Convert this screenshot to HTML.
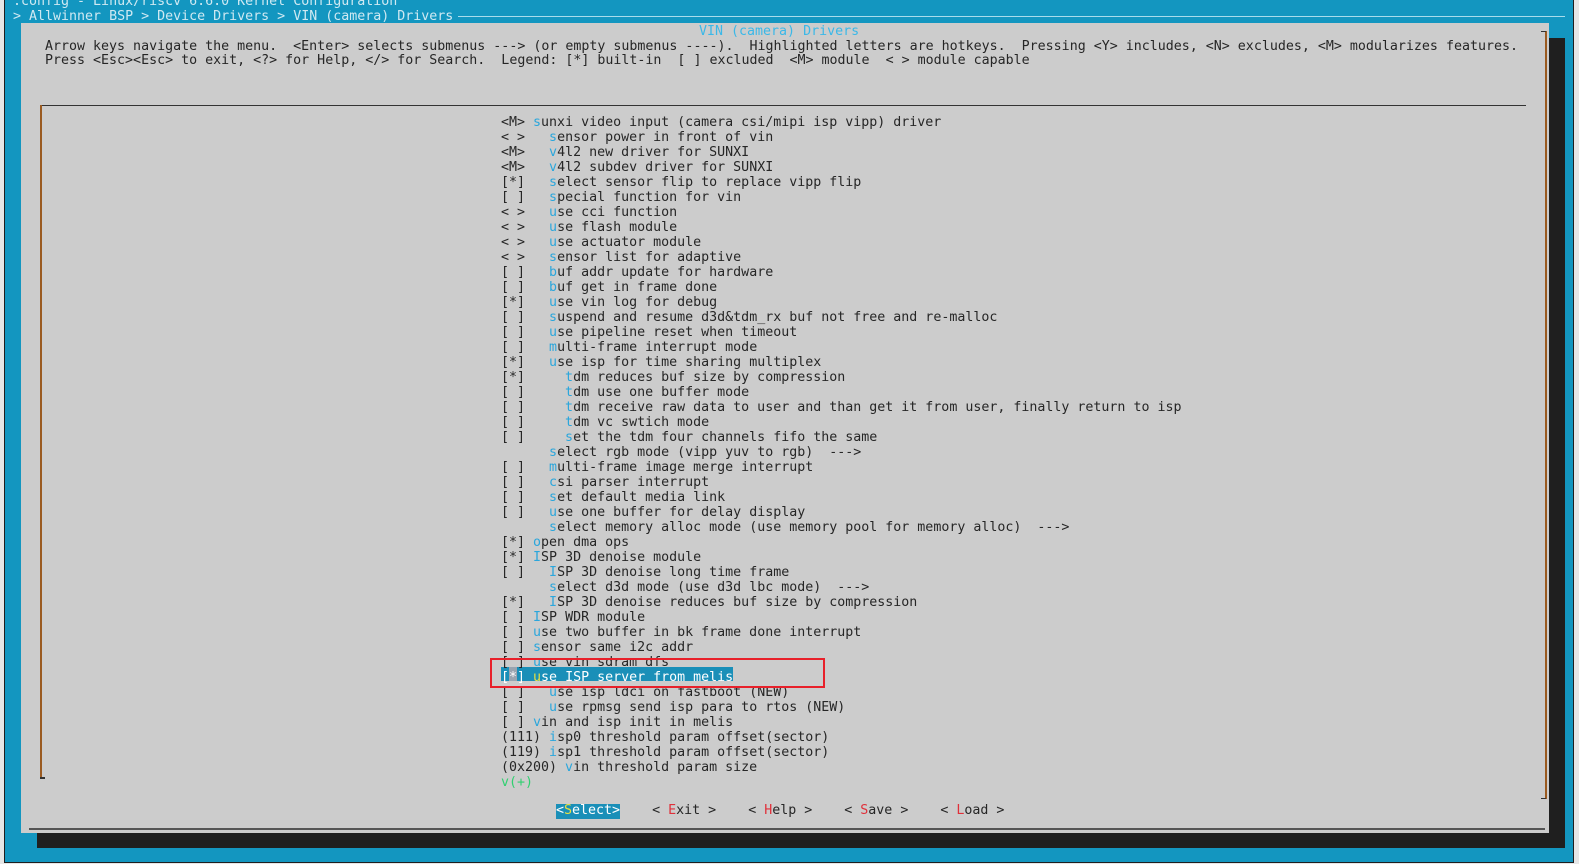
<!DOCTYPE html>
<html><head><meta charset="utf-8"><style>
*{margin:0;padding:0}
body{width:1579px;height:864px;background:#e6e6e6;position:relative;overflow:hidden;font-family:"DejaVu Sans Mono","Liberation Mono",monospace;font-size:13.3px;}
.abs{position:absolute}
pre{position:absolute;font-family:inherit;font-size:13.3px;line-height:14.9px;color:#262626;white-space:pre}
.h{color:#2aa6dc}
.r{color:#e0303a}
</style></head><body>
<div class="abs" style="left:4px;top:0;width:1570px;height:863px;background:#1f1f1f"></div>
<div class="abs" style="left:5px;top:0;width:1568px;height:862px;background:#1396c0"></div>
<pre style="left:13px;top:-5px;color:#cfe9f2">.config - Linux/riscv 6.6.0 Kernel Configuration
> Allwinner BSP > Device Drivers > VIN (camera) Drivers</pre>
<div class="abs" style="left:458px;top:16px;width:1107px;height:1px;background:#a8dcec"></div>
<div class="abs" style="left:37px;top:38px;width:1528px;height:810px;background:#1f1f1f"></div>
<div class="abs" style="left:21px;top:23px;width:1528px;height:810px;background:#cccccc"></div>
<pre style="left:699px;top:24.5px;color:#3ab8e8">VIN (camera) Drivers</pre>
<pre style="left:45px;top:39.5px">Arrow keys navigate the menu.  &lt;Enter&gt; selects submenus ---&gt; (or empty submenus ----).  Highlighted letters are hotkeys.  Pressing &lt;Y&gt; includes, &lt;N&gt; excludes, &lt;M&gt; modularizes features.
Press &lt;Esc&gt;&lt;Esc&gt; to exit, &lt;?&gt; for Help, &lt;/&gt; for Search.  Legend: [*] built-in  [ ] excluded  &lt;M&gt; module  &lt; &gt; module capable</pre>
<div class="abs" style="left:40px;top:105px;width:1486px;height:1px;background:#333"></div>
<div class="abs" style="left:40px;top:105px;width:2px;height:673px;background:#9a5a20"></div>
<div class="abs" style="left:40px;top:777px;width:5px;height:2px;background:#333"></div>
<div class="abs" style="left:1545px;top:31px;width:2px;height:768px;background:#9a5a20"></div>
<div class="abs" style="left:1541px;top:31px;width:5px;height:1px;background:#333"></div>
<div class="abs" style="left:1541px;top:798px;width:5px;height:1px;background:#333"></div>
<div class="abs" style="left:29px;top:828px;width:1516px;height:2px;background:#555"></div>
<div class="abs" style="left:501px;top:667px;width:232px;height:14px;background:#1a8fb8"></div>
<div class="abs" style="left:509px;top:667px;width:8px;height:14px;background:#9aa4b0"></div>
<pre style="left:501px;top:114.5px;line-height:15.02px">&lt;M&gt; <span class="h">s</span>unxi video input (camera csi/mipi isp vipp) driver
&lt; &gt;   <span class="h">s</span>ensor power in front of vin
&lt;M&gt;   <span class="h">v</span>4l2 new driver for SUNXI
&lt;M&gt;   <span class="h">v</span>4l2 subdev driver for SUNXI
[*]   <span class="h">s</span>elect sensor flip to replace vipp flip
[ ]   <span class="h">s</span>pecial function for vin
&lt; &gt;   <span class="h">u</span>se cci function
&lt; &gt;   <span class="h">u</span>se flash module
&lt; &gt;   <span class="h">u</span>se actuator module
&lt; &gt;   <span class="h">s</span>ensor list for adaptive
[ ]   <span class="h">b</span>uf addr update for hardware
[ ]   <span class="h">b</span>uf get in frame done
[*]   <span class="h">u</span>se vin log for debug
[ ]   <span class="h">s</span>uspend and resume d3d&amp;tdm_rx buf not free and re-malloc
[ ]   <span class="h">u</span>se pipeline reset when timeout
[ ]   <span class="h">m</span>ulti-frame interrupt mode
[*]   <span class="h">u</span>se isp for time sharing multiplex
[*]     <span class="h">t</span>dm reduces buf size by compression
[ ]     <span class="h">t</span>dm use one buffer mode
[ ]     <span class="h">t</span>dm receive raw data to user and than get it from user, finally return to isp
[ ]     <span class="h">t</span>dm vc swtich mode
[ ]     <span class="h">s</span>et the tdm four channels fifo the same
      <span class="h">s</span>elect rgb mode (vipp yuv to rgb)  ---&gt;
[ ]   <span class="h">m</span>ulti-frame image merge interrupt
[ ]   <span class="h">c</span>si parser interrupt
[ ]   <span class="h">s</span>et default media link
[ ]   <span class="h">u</span>se one buffer for delay display
      <span class="h">s</span>elect memory alloc mode (use memory pool for memory alloc)  ---&gt;
[*] <span class="h">o</span>pen dma ops
[*] <span class="h">I</span>SP 3D denoise module
[ ]   <span class="h">I</span>SP 3D denoise long time frame
      <span class="h">s</span>elect d3d mode (use d3d lbc mode)  ---&gt;
[*]   <span class="h">I</span>SP 3D denoise reduces buf size by compression
[ ] <span class="h">I</span>SP WDR module
[ ] <span class="h">u</span>se two buffer in bk frame done interrupt
[ ] <span class="h">s</span>ensor same i2c addr
[ ] <span class="h">u</span>se vin sdram dfs
<span style="color:#fff">[*] <span style="color:#e8e040">u</span>se ISP server from melis</span>
[ ]   <span class="h">u</span>se isp ldci on fastboot (NEW)
[ ]   <span class="h">u</span>se rpmsg send isp para to rtos (NEW)
[ ] <span class="h">v</span>in and isp init in melis
(111) <span class="h">i</span>sp0 threshold param offset(sector)
(119) <span class="h">i</span>sp1 threshold param offset(sector)
(0x200) <span class="h">v</span>in threshold param size
<span style="color:#30d070">v(+)</span></pre>
<div class="abs" style="left:490px;top:658px;width:331px;height:26px;border:2px solid #e8202a"></div>
<div class="abs" style="left:556px;top:804px;width:64px;height:15px;background:#1a8fb8"></div>
<pre style="left:556px;top:803.5px"><span style="color:#fff">&lt;<span style="color:#e8e040">S</span>elect&gt;</span>    &lt; <span class="r">E</span>xit &gt;    &lt; <span class="r">H</span>elp &gt;    &lt; <span class="r">S</span>ave &gt;    &lt; <span class="r">L</span>oad &gt;</pre>
</body></html>
